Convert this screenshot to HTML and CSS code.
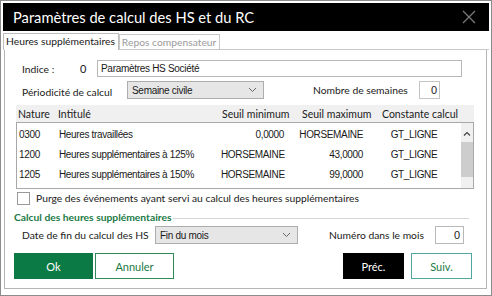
FILE: index.html
```html
<!DOCTYPE html>
<html lang="fr">
<head>
    <meta charset="UTF-8">
    <title>Paramètres de calcul des HS et du RC</title>
    <link rel="stylesheet" href="styles.css">
</head>
<body>
<div class="window">
    <div class="titlebar">
        <span class="title">Paramètres de calcul des HS et du RC</span>
        <svg class="close" width="14" height="14" viewBox="0 0 14 14"><path d="M1 1 L13 13 M13 1 L1 13" stroke="#7a7a7a" stroke-width="1.3"/></svg>
    </div>
    <div class="tabs">
        <div class="tab active">Heures supplémentaires</div>
        <div class="tab">Repos compensateur</div>
    </div>
    <div class="panel">
        <div class="row row-indice">
            <span class="label lbl-indice">Indice :</span>
            <span class="num">0</span>
            <div class="input input-name">Paramètres HS Société</div>
        </div>
        <div class="row row-period">
            <span class="label lbl-period">Périodicité de calcul</span>
            <div class="select sel-period"><span>Semaine civile</span><svg width="9" height="6" viewBox="0 0 9 6"><path d="M1 1 L4.5 4.5 L8 1" fill="none" stroke="#666" stroke-width="1"/></svg></div>
            <span class="label lbl-weeks">Nombre de semaines</span>
            <div class="input input-small">0</div>
        </div>

        <div class="grid-head">
            <span class="h-nature">Nature</span>
            <span class="h-label">Intitulé</span>
            <span class="h-min">Seuil minimum</span>
            <span class="h-max">Seuil maximum</span>
            <span class="h-const">Constante calcul</span>
        </div>
        <div class="grid-body">
            <div class="grid-rows">
                <div class="grid-row">
                    <span>0300</span><span>Heures travaillées</span><span class="r">0,0000</span><span class="r">HORSEMAINE</span><span class="c">GT_LIGNE</span>
                </div>
                <div class="grid-row">
                    <span>1200</span><span>Heures supplémentaires à 125%</span><span class="r">HORSEMAINE</span><span class="r">43,0000</span><span class="c">GT_LIGNE</span>
                </div>
                <div class="grid-row">
                    <span>1205</span><span>Heures supplémentaires à 150%</span><span class="r">HORSEMAINE</span><span class="r">99,0000</span><span class="c">GT_LIGNE</span>
                </div>
            </div>
            <div class="scrollbar">
                <svg width="12" height="10" viewBox="0 0 12 10"><path d="M3 6.5 L6 3.5 L9 6.5" fill="none" stroke="#444" stroke-width="1.2"/></svg>
                <div class="thumb"></div>
            </div>
        </div>

        <div class="row row-check">
            <span class="checkbox"></span>
            <span class="label">Purge des événements ayant servi au calcul des heures supplémentaires</span>
        </div>

        <div class="section">
            <span>Calcul des heures supplémentaires</span>
            <span class="rule"></span>
        </div>

        <div class="row row-date">
            <span class="label lbl-date">Date de fin du calcul des HS</span>
            <div class="select sel-date"><span>Fin du mois</span><svg width="9" height="6" viewBox="0 0 9 6"><path d="M1 1 L4.5 4.5 L8 1" fill="none" stroke="#666" stroke-width="1"/></svg></div>
            <span class="label lbl-month">Numéro dans le mois</span>
            <div class="input input-month">0</div>
        </div>

        <div class="buttons">
            <button class="btn btn-green">Ok</button>
            <button class="btn btn-outline">Annuler</button>
            <span class="spacer"></span>
            <button class="btn btn-black">Préc.</button>
            <button class="btn btn-outline btn-next">Suiv.</button>
        </div>
    </div>
</div>
</body>
</html>
```

FILE: styles.css
```css
body {
    margin: 0;
    background: #fff;
    font-family: Lato, "Noto Sans", sans-serif;
    color: #1a1a1a;
}
.window {
    width: 492px;
    height: 296px;
    box-sizing: border-box;
    border: 1px solid #8c8c8c;
    padding: 2px;
    background: #fff;
}
.titlebar {
    height: 28px;
    background: #000;
    color: #fff;
    display: flex;
    align-items: center;
    padding-left: 10px;
    padding-right: 13px;
}
.title {
    font-size: 14.7px;
    flex: 1;
}
.tabs {
    display: flex;
    height: 16px;
    margin-top: 2px;
    border-bottom: 1px solid #c8c8c8;
    font-size: 10.3px;
}
.tab {
    padding: 0 3px 0 2px;
    line-height: 15px;
    border: 1px solid #c8c8c8;
    border-bottom: none;
    color: #9a9a9a;
    margin-top: 1px;
}
.tab.active {
    color: #1a1a1a;
    margin-top: 0;
    border-color: #bdbdbd;
    background: #fff;
    margin-bottom: -1px;
}
.panel {
    height: 239px;
    box-sizing: border-box;
    margin: 0 2px 0 1px;
    border: 1px solid #b5b5b5;
    border-top: none;
    padding: 10px 11px 0 10px;
}
.row {
    display: flex;
    align-items: center;
    font-size: 10.3px;
}
.label {
    white-space: nowrap;
}
.input {
    box-sizing: border-box;
    border: 1px solid #b8b8b8;
    background: #fff;
    font-family: "Liberation Sans", Arial, sans-serif;
    font-size: 10px;
    display: flex;
    align-items: center;
}
.row-indice {
    height: 17px;
}
.lbl-indice {
    margin-left: 7px;
    width: 58px;
}
.num {
    width: 8px;
    font-size: 11px;
}
.input-name {
    margin-left: 9px;
    width: 365px;
    height: 17px;
    padding-left: 3px;
    letter-spacing: -0.3px;
}
.row-period {
    margin-top: 4px;
    height: 18px;
}
.lbl-period {
    margin-left: 7px;
    width: 105px;
    padding-top: 3px;
}
.select {
    box-sizing: border-box;
    height: 18px;
    border: 1px solid #adadad;
    background: #e6e6e6;
    display: flex;
    align-items: center;
    justify-content: space-between;
    padding: 0 6px 0 4px;
    font-family: "Liberation Sans", Arial, sans-serif;
    font-size: 10px;
    letter-spacing: -0.3px;
}
.sel-period {
    width: 137px;
}
.lbl-weeks {
    margin-left: 49px;
    width: 106px;
}
.input-small {
    width: 21px;
    height: 18px;
    justify-content: flex-end;
    padding-right: 2px;
    border-color: #c4c4c4;
    font-size: 11px;
}
.grid-head {
    margin-top: 6px;
    height: 17px;
    background: #f0f0f0;
    display: flex;
    align-items: center;
    font-size: 10.5px;
    width: 458px;
    margin-left: 1px;
}
.grid-head span {
    white-space: nowrap;
}
.h-nature { width: 40px; padding-left: 2px; box-sizing: border-box; }
.h-label { width: 165px; padding-left: 2px; box-sizing: border-box; }
.h-min { width: 80px; padding-left: 1px; box-sizing: border-box; }
.h-max { width: 80px; padding-left: 1px; box-sizing: border-box; }
.h-const { padding-left: 1px; }
.grid-body {
    margin-left: 1px;
    width: 458px;
    height: 67px;
    box-sizing: border-box;
    border: 1px solid #a8a8a8;
    display: flex;
}
.grid-rows {
    flex: 1;
    padding-top: 1px;
}
.grid-row {
    display: grid;
    grid-template-columns: 40px 162px 67px 79px 96px;
    height: 20px;
    align-items: center;
    font-family: "Liberation Sans", Arial, sans-serif;
    font-size: 10px;
    letter-spacing: -0.35px;
}
.grid-row span {
    padding-left: 2px;
    white-space: nowrap;
}
.grid-row .r {
    text-align: right;
    padding-right: 2px;
}
.grid-row .c {
    text-align: center;
}
.scrollbar {
    width: 12px;
    background: #f0f0f0;
    display: flex;
    flex-direction: column;
    align-items: center;
}
.scrollbar svg {
    margin-top: 6px;
}
.thumb {
    width: 12px;
    height: 35px;
    margin-top: 3px;
    background: #cdcdcd;
}
.row-check {
    margin-top: 2px;
    height: 14px;
}
.checkbox {
    width: 11px;
    height: 11px;
    border: 1px solid #9a9a9a;
    margin-left: 2px;
    margin-right: 6px;
}
.section {
    margin-top: 6px;
    display: flex;
    align-items: center;
    color: #1b7a45;
    font-size: 10.3px;
    font-weight: 700;
    margin-left: -1px;
}
.section .rule {
    flex: 1;
    height: 1px;
    background: #d6d6d6;
    margin: 3px 6px 0 2px;
}
.row-date {
    margin-top: 3px;
    height: 18px;
}
.lbl-date {
    margin-left: 7px;
    width: 133px;
}
.sel-date {
    width: 143px;
}
.lbl-month {
    margin-left: 31px;
    width: 106px;
}
.input-month {
    width: 29px;
    height: 18px;
    justify-content: flex-end;
    padding-right: 3px;
    font-size: 11px;
}
.buttons {
    display: flex;
    margin-top: 9px;
    margin-left: -1px;
    gap: 2px;
}
.btn {
    width: 79px;
    height: 26px;
    box-sizing: border-box;
    font-family: Lato, "Noto Sans", sans-serif;
    font-size: 11px;
    border: none;
    padding: 0;
    cursor: pointer;
}
.btn-green {
    background: #0b7a45;
    color: #fff;
}
.btn-outline {
    background: #fff;
    color: #1b7a45;
    border: 1px solid #2f8a58;
}
.spacer {
    flex: 1;
}
.btn-black {
    width: 61px;
    background: #000;
    color: #fff;
    margin-right: 5px;
}
.btn-next {
    width: 61px;
    border-color: #4fa7a0;
    margin-right: 3px;
}
```
